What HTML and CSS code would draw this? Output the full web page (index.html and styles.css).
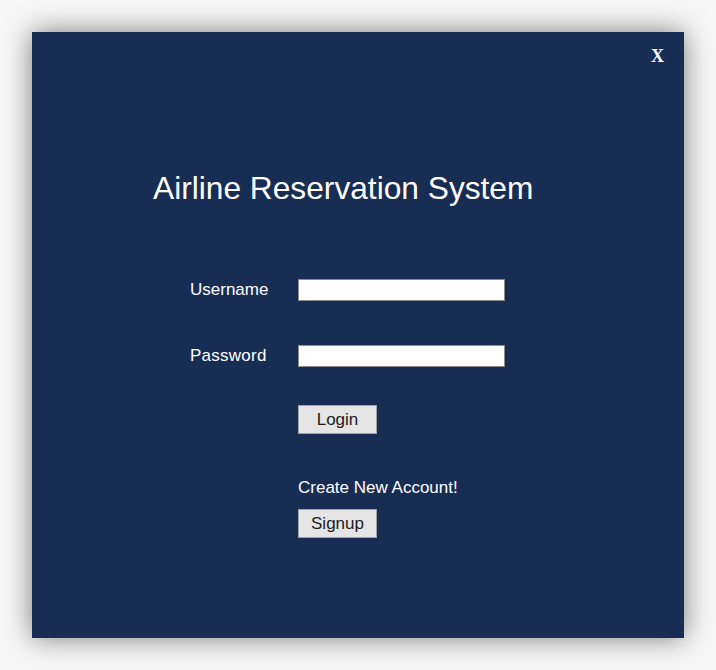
FILE: index.html
```html
<!DOCTYPE html>
<html>
<head>
<meta charset="utf-8">
<link rel="stylesheet" href="styles.css">
</head>
<body>
<div class="window">
  <div class="close">X</div>
  <h1 class="title">Airline Reservation System</h1>
  <div class="form">
    <label class="label">Username</label>
    <input class="field" type="text">
    <label class="label">Password</label>
    <input class="field" type="password">
    <div></div>
    <button class="btn btn-login">Login</button>
    <div></div>
    <div class="create">Create New Account!</div>
    <div></div>
    <button class="btn btn-signup">Signup</button>
  </div>
</div>
</body>
</html>
```
FILE: styles.css
```css
html, body {
  margin: 0;
  padding: 0;
  background: #f7f7f7;
  width: 716px;
  height: 670px;
  overflow: hidden;
}
.window {
  position: relative;
  margin: 32px 0 0 32px;
  width: 652px;
  height: 606px;
  background: #172d53;
  box-shadow: 0 0 26px rgba(0, 0, 0, 0.5);
  font-family: "Liberation Sans", Arial, sans-serif;
  color: #ffffff;
  box-sizing: border-box;
  padding-top: 140px;
}
.close {
  position: absolute;
  top: 14px;
  right: 20px;
  font-family: "Liberation Serif", "Times New Roman", serif;
  font-size: 18px;
  font-weight: bold;
  line-height: 20px;
  color: #ffffff;
}
.title {
  margin: 0 0 0 121px;
  font-size: 31.7px;
  font-weight: normal;
  line-height: 32px;
  white-space: nowrap;
}
.form {
  display: grid;
  grid-template-columns: 108px 207px;
  margin: 75px 0 0 158px;
  align-items: center;
}
.label {
  font-size: 17px;
  line-height: 20px;
  color: #ffffff;
}
.label-pw {
  letter-spacing: 0.2px;
}
.field {
  width: 207px;
  height: 22px;
  box-sizing: border-box;
  border: 1px solid #8c8c8c;
  background: #ffffff;
  margin: 0;
  padding: 0 3px;
  outline: none;
}
.field + .label {
  margin-top: 44px;
  letter-spacing: 0.25px;
}
.form > .field:nth-of-type(2) {
  margin-top: 44px;
}
.btn {
  width: 79px;
  height: 29px;
  box-sizing: border-box;
  border: 1px solid #a3a3a3;
  background: #e5e5e5;
  color: #1c1c1c;
  font-family: "Liberation Sans", Arial, sans-serif;
  font-size: 17px;
  padding: 0;
  margin: 0;
}
.btn-login {
  margin-top: 38px;
}
.create {
  margin-top: 44px;
  font-size: 17px;
  line-height: 20px;
  white-space: nowrap;
}
.btn-signup {
  margin-top: 11px;
}
```
